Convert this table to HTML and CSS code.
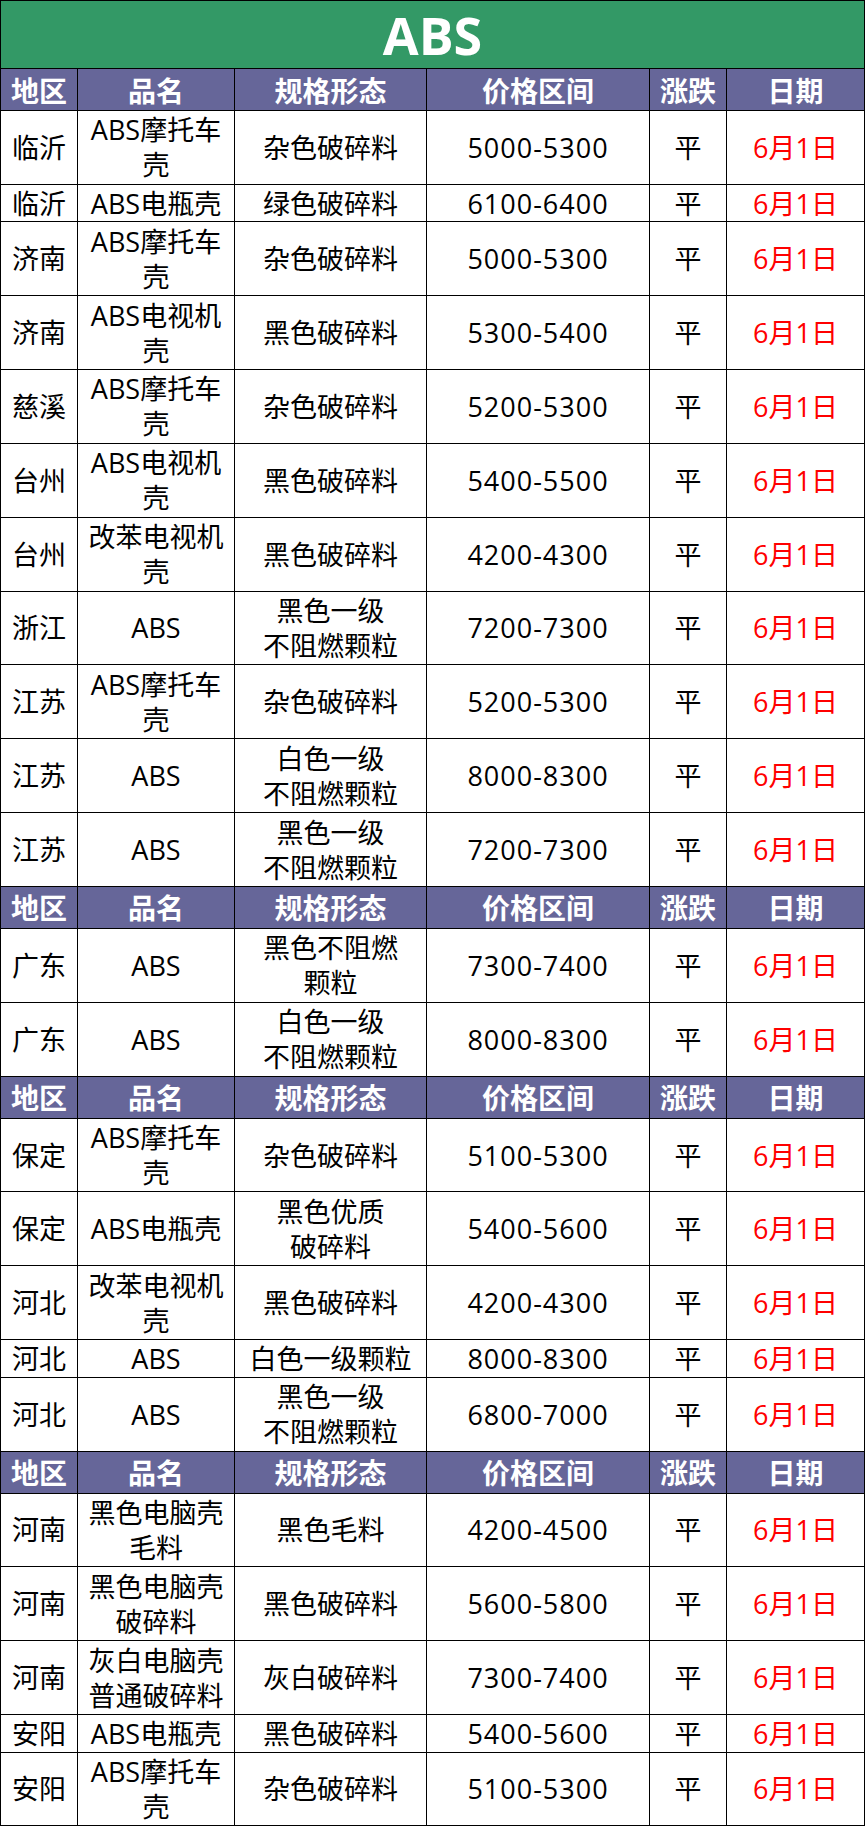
FILE: index.html
```html
<!DOCTYPE html>
<html lang="zh-CN">
<head>
<meta charset="utf-8">
<title>ABS</title>
<link rel="stylesheet" href="styles.css">
</head>
<body>
<table class="sheet">
  <colgroup>
    <col class="c-region"><col class="c-name"><col class="c-spec"><col class="c-price"><col class="c-trend"><col class="c-date">
  </colgroup>
  <tbody>
    <tr class="title-row"><td colspan="6" class="title">ABS</td></tr>

    <tr class="head"><td>地区</td><td>品名</td><td>规格形态</td><td>价格区间</td><td>涨跌</td><td>日期</td></tr>
    <tr class="r2"><td>临沂</td><td>ABS摩托车<br>壳</td><td>杂色破碎料</td><td class="price">5000-5300</td><td>平</td><td class="date">6月1日</td></tr>
    <tr class="r1"><td>临沂</td><td>ABS电瓶壳</td><td>绿色破碎料</td><td class="price">6100-6400</td><td>平</td><td class="date">6月1日</td></tr>
    <tr class="r2"><td>济南</td><td>ABS摩托车<br>壳</td><td>杂色破碎料</td><td class="price">5000-5300</td><td>平</td><td class="date">6月1日</td></tr>
    <tr class="r2"><td>济南</td><td>ABS电视机<br>壳</td><td>黑色破碎料</td><td class="price">5300-5400</td><td>平</td><td class="date">6月1日</td></tr>
    <tr class="r2"><td>慈溪</td><td>ABS摩托车<br>壳</td><td>杂色破碎料</td><td class="price">5200-5300</td><td>平</td><td class="date">6月1日</td></tr>
    <tr class="r2"><td>台州</td><td>ABS电视机<br>壳</td><td>黑色破碎料</td><td class="price">5400-5500</td><td>平</td><td class="date">6月1日</td></tr>
    <tr class="r2"><td>台州</td><td>改苯电视机<br>壳</td><td>黑色破碎料</td><td class="price">4200-4300</td><td>平</td><td class="date">6月1日</td></tr>
    <tr class="r2"><td>浙江</td><td>ABS</td><td>黑色一级<br>不阻燃颗粒</td><td class="price">7200-7300</td><td>平</td><td class="date">6月1日</td></tr>
    <tr class="r2"><td>江苏</td><td>ABS摩托车<br>壳</td><td>杂色破碎料</td><td class="price">5200-5300</td><td>平</td><td class="date">6月1日</td></tr>
    <tr class="r2"><td>江苏</td><td>ABS</td><td>白色一级<br>不阻燃颗粒</td><td class="price">8000-8300</td><td>平</td><td class="date">6月1日</td></tr>
    <tr class="r2"><td>江苏</td><td>ABS</td><td>黑色一级<br>不阻燃颗粒</td><td class="price">7200-7300</td><td>平</td><td class="date">6月1日</td></tr>

    <tr class="head"><td>地区</td><td>品名</td><td>规格形态</td><td>价格区间</td><td>涨跌</td><td>日期</td></tr>
    <tr class="r2"><td>广东</td><td>ABS</td><td>黑色不阻燃<br>颗粒</td><td class="price">7300-7400</td><td>平</td><td class="date">6月1日</td></tr>
    <tr class="r2"><td>广东</td><td>ABS</td><td>白色一级<br>不阻燃颗粒</td><td class="price">8000-8300</td><td>平</td><td class="date">6月1日</td></tr>

    <tr class="head"><td>地区</td><td>品名</td><td>规格形态</td><td>价格区间</td><td>涨跌</td><td>日期</td></tr>
    <tr class="r2"><td>保定</td><td>ABS摩托车<br>壳</td><td>杂色破碎料</td><td class="price">5100-5300</td><td>平</td><td class="date">6月1日</td></tr>
    <tr class="r2"><td>保定</td><td>ABS电瓶壳</td><td>黑色优质<br>破碎料</td><td class="price">5400-5600</td><td>平</td><td class="date">6月1日</td></tr>
    <tr class="r2"><td>河北</td><td>改苯电视机<br>壳</td><td>黑色破碎料</td><td class="price">4200-4300</td><td>平</td><td class="date">6月1日</td></tr>
    <tr class="r1"><td>河北</td><td>ABS</td><td>白色一级颗粒</td><td class="price">8000-8300</td><td>平</td><td class="date">6月1日</td></tr>
    <tr class="r2"><td>河北</td><td>ABS</td><td>黑色一级<br>不阻燃颗粒</td><td class="price">6800-7000</td><td>平</td><td class="date">6月1日</td></tr>

    <tr class="head"><td>地区</td><td>品名</td><td>规格形态</td><td>价格区间</td><td>涨跌</td><td>日期</td></tr>
    <tr class="r2"><td>河南</td><td>黑色电脑壳<br>毛料</td><td>黑色毛料</td><td class="price">4200-4500</td><td>平</td><td class="date">6月1日</td></tr>
    <tr class="r2"><td>河南</td><td>黑色电脑壳<br>破碎料</td><td>黑色破碎料</td><td class="price">5600-5800</td><td>平</td><td class="date">6月1日</td></tr>
    <tr class="r2"><td>河南</td><td>灰白电脑壳<br>普通破碎料</td><td>灰白破碎料</td><td class="price">7300-7400</td><td>平</td><td class="date">6月1日</td></tr>
    <tr class="r1"><td>安阳</td><td>ABS电瓶壳</td><td>黑色破碎料</td><td class="price">5400-5600</td><td>平</td><td class="date">6月1日</td></tr>
    <tr class="r2"><td>安阳</td><td>ABS摩托车<br>壳</td><td>杂色破碎料</td><td class="price">5100-5300</td><td>平</td><td class="date">6月1日</td></tr>
  </tbody>
</table>
</body>
</html>
```

FILE: styles.css
```css
html, body {
  margin: 0;
  padding: 0;
  background: #ffffff;
}

.sheet {
  border-collapse: collapse;
  table-layout: fixed;
  width: 864px;
  font-family: "Open Sans", "Noto Sans CJK SC", sans-serif;
  font-size: 27px;
  line-height: 35px;
  color: #000000;
}

.c-region { width: 77px; }
.c-name { width: 157px; }
.c-spec { width: 192px; }
.c-price { width: 223px; }
.c-trend { width: 77px; }
.c-date { width: 138px; }

.sheet td {
  border: 1px solid #000000;
  padding: 0;
  text-align: center;
  vertical-align: middle;
  white-space: nowrap;
}

.title-row { height: 68px; }

.sheet td.title {
  background: #339966;
  color: #ffffff;
  font-family: "Open Sans", "Noto Sans CJK SC", sans-serif;
  font-weight: 700;
  font-size: 52px;
  line-height: 64px;
}

.head { height: 42px; }

.head td {
  background: #666699;
  color: #ffffff;
  font-family: "Noto Sans CJK SC", sans-serif;
  font-weight: 700;
  font-size: 28px;
  line-height: 34px;
}

.r2 { height: 73.85px; }
.r1 { height: 37.5px; }

.sheet td.price {
  letter-spacing: 1px;
}

.sheet td.date {
  color: #ff0000;
}
```
